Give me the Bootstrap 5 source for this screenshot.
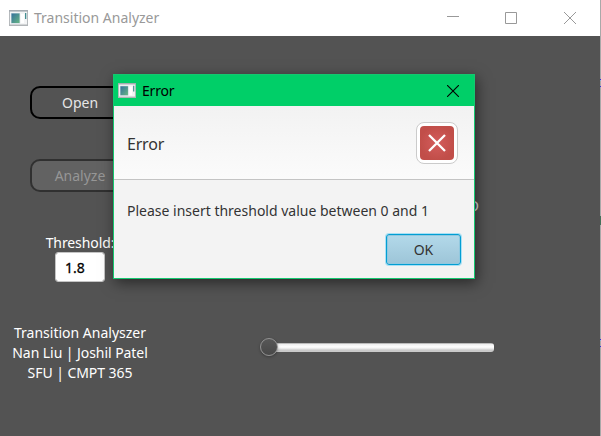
<!DOCTYPE html>
<html lang="en">
<head>
<meta charset="utf-8">
<meta name="viewport" content="width=device-width, initial-scale=1">
<title>Transition Analyzer</title>
<link href="https://cdn.jsdelivr.net/npm/bootstrap@5.3.0/dist/css/bootstrap.min.css" rel="stylesheet">
<style>
body{font-family:"Segoe UI","Noto Sans","Open Sans",sans-serif;font-size:14px;line-height:20px;width:601px;height:436px;background:#535353}
.app-window{width:601px;height:436px;border-right:1px solid #a9a9a9}
.title-strip{height:36px;color:#999;padding-left:9px}
.app-icon{margin-right:6px}
.win-buttons{gap:46px;padding-right:24px}
.maximize{margin-right:1px}
.side{width:160px;padding-top:50px}
.round-btn{width:100px;height:33px;border:2px solid #000;border-radius:10px;background:#535353;color:#e6e6e6;font-size:14px;line-height:20px;padding:0}
.round-btn:disabled{border-color:#303030;background:#626262;color:#969696;opacity:1}
.gap-buttons{margin-top:40px}
.threshold{margin-top:41px;line-height:19px;letter-spacing:-.1px}
.value-box{width:50px;height:30px;border:1px solid #c4c4c4;border-radius:3px;font-size:14px;padding:0 9px;color:#000;-webkit-text-stroke:.3px #000}
.value-box:focus{box-shadow:none}
.credits{margin-top:41px}
.names{letter-spacing:-.06px}
.stage{padding:160px 0 0 100px}
.state{width:219px;color:#e6e6e6;line-height:20px}
.slider{margin-top:122px;height:18px;width:234px}
.thumb{width:18px;height:18px;border:1px solid #929292;border-radius:50%;background:linear-gradient(#575757,#484848);box-shadow:0 1px 3px rgba(0,0,0,.3);z-index:1}
.track{height:9px;margin-left:-3px;margin-top:1px;border-radius:0 3px 3px 0;background:linear-gradient(#bcbcbc 0 1px,#eee 1px,#fff 4px,#e4e4e4 6px,#c9c9c9 7px)}
.error-dialog{left:113px;top:74px;width:362px;height:205px;border:1px solid #14c870;background:#f3f3f3;color:#333;box-shadow:2px 4px 13px rgba(0,0,0,.5)}
.dialog-title{height:31px;background:#00cf68;color:#000;padding:0 15px 0 4px;letter-spacing:-.2px}
.dialog-head{height:74px;padding:0 16px 0 13px;border-bottom:1px solid #c4c4c4;background:linear-gradient(#f2f2f2,#fbfbfb);font-size:16px}
.head-text{padding-top:2px;letter-spacing:-.2px}
.error-mark{width:42px;height:42px;border:1px solid #cbcbcb;border-radius:8px;background:#fff}
.dialog-text{padding:21px 13px 0}
.ok-btn{width:75px;height:31px;margin:13px 13px 0 0;border:1px solid #039ed3;border-radius:3px;padding:0;background:linear-gradient(#b3d9ea,#9dc5d8);box-shadow:0 0 0 1px #a9e0f4,inset 0 0 0 1px #91c8df;color:#333;font-size:14px}
/* slivers of the window behind, showing along the right border */
.behind-edge{top:36px;right:-1px;width:1px;height:400px;background:linear-gradient(#a9a9a9 43px,#3c32d2 43px 44px,#8fb4d8 44px 45px,#a9a9a9 45px 50px,#3c32d2 50px 51px,#a9a9a9 51px 180px,#45705a 180px 189px,#a9a9a9 189px 303px,#3c32d2 303px 304px,#8fb4d8 304px 305px,#a9a9a9 305px 310px,#3c32d2 310px 311px,#a9a9a9 311px)}
</style>
</head>
<body class="m-0 overflow-hidden">
<svg class="position-absolute" width="0" height="0"><defs>
<linearGradient id="pane" x1="0" y1="0" x2="1" y2="1"><stop stop-color="#34709c"/><stop offset="1" stop-color="#66b583"/></linearGradient>
<radialGradient id="red"><stop stop-color="#d45c5c"/><stop offset="1" stop-color="#c14e49"/></radialGradient>
<symbol id="window-icon" viewBox="0 0 19 16"><path d="M.5.5h18v15H.5z" fill="#f3f4f5" stroke="#b6babd"/><path d="M0 0h19v1.6H0z" fill="#a4abb1"/><path d="M0 14.5h19V16H0z" fill="#b0b4b7"/><path d="M2 3h9v10.500H2z" fill="#c2d5dc"/><path d="M2.500 3.500h8v9.500h-8z" fill="url(#pane)"/><path d="M12 4h3v9h-3z" fill="#fff"/><path d="M16 3h1.300v6H16z" fill="#448e91"/></symbol>
</defs></svg>
<main class="app-window position-relative d-flex flex-column">
  <header class="title-strip bg-white d-flex align-items-center">
    <svg class="app-icon" width="19" height="16"><use href="#window-icon"/></svg>
    <span>Transition Analyzer</span>
    <div class="win-buttons ms-auto d-flex align-items-center">
      <svg width="12" height="12"><path d="M0 4.500h12" stroke="#999"/></svg>
      <svg class="maximize" width="12" height="12"><path d="M.5.5h11v11H.5z" fill="none" stroke="#999"/></svg>
      <svg width="12" height="12"><path d="M0 0l12 12M12 0L0 12" stroke="#999" fill="none"/></svg>
    </div>
  </header>
  <div class="d-flex flex-grow-1">
    <section class="side d-flex flex-column align-items-center text-white">
      <button class="round-btn btn">Open</button>
      <button class="round-btn btn gap-buttons" disabled>Analyze</button>
      <label class="threshold" for="threshold">Threshold:</label>
      <input id="threshold" class="value-box form-control" value="1.8">
      <div class="credits text-center text-nowrap">
        <div>Transition Analyszer</div><div class="names">Nan Liu | Joshil Patel</div><div class="names">SFU | CMPT 365</div>
      </div>
    </section>
    <section class="stage">
      <div class="state text-end">O</div>
      <div class="slider d-flex align-items-center"><div class="thumb flex-shrink-0"></div><div class="track flex-grow-1"></div></div>
    </section>
  </div>
  <div class="behind-edge position-absolute"></div>
  <section class="error-dialog position-absolute" role="dialog" aria-label="Error">
    <div class="dialog-title d-flex align-items-center">
      <svg class="app-icon" width="18" height="15"><use href="#window-icon"/></svg>
      <span>Error</span>
      <svg class="ms-auto" width="12" height="12"><path d="M0 0l12 12M12 0L0 12" stroke="#000" stroke-width="1.1"/></svg>
    </div>
    <div class="dialog-head d-flex align-items-center justify-content-between"><span class="head-text">Error</span>
      <div class="error-mark d-flex align-items-center justify-content-center"><svg width="34" height="34"><rect width="34" height="34" rx="4" fill="url(#red)"/><path d="M9 9l16 16M25 9L9 25" stroke="#fff" stroke-width="2.3"/></svg></div>
    </div>
    <div class="dialog-text text-nowrap">Please insert threshold value between 0 and 1</div>
    <div class="d-flex justify-content-end"><button class="btn ok-btn">OK</button></div>
  </section>
</main>
<script src="https://cdn.jsdelivr.net/npm/bootstrap@5.3.0/dist/js/bootstrap.bundle.min.js"></script>
</body>
</html>
